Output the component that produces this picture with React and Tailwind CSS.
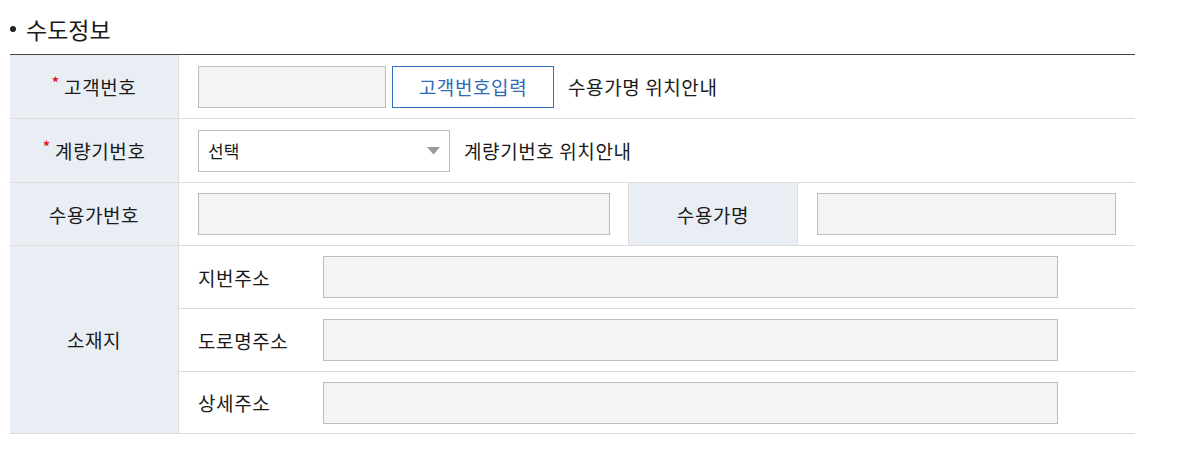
const font = { fontFamily: '"Noto Sans CJK KR", "Noto Sans", sans-serif' };

function Field({ className = '' }) {
  return <div className={`h-[42px] border border-[#bdbdbd] bg-[#f4f4f4] ${className}`} />;
}

function Head({ children, required, className = '' }) {
  return (
    <div className={`flex items-center justify-center bg-[#e9eef5] border-[#dcdcdc] ${className}`}>
      {required && <span className="text-[#e60012] text-[17px] mr-[4px] -translate-y-[4px]">*</span>}
      <span>{children}</span>
    </div>
  );
}

function SubRow({ label, h, last }) {
  return (
    <div className={`flex items-center pl-[19px] ${h} ${last ? '' : 'border-b border-[#dcdcdc]'}`}>
      <span className="w-[125px]">{label}</span>
      <Field className="w-[735px]" />
    </div>
  );
}

export default function App() {
  return (
    <div className="bg-white w-[1179px] h-[453px] text-[#1a1a1a] text-[19px] leading-none tracking-[0.6px]" style={font}>
      <div className="ml-[10px] w-[1125px]">
        <div className="h-[54px] flex items-center gap-[10px] pt-[4px]">
          <span className="w-[6px] h-[6px] rounded-full bg-[#222]" />
          <h2 className="text-[23px] font-normal tracking-normal">수도정보</h2>
        </div>

        <div className="border-t border-[#444]">
          <div className="flex h-[64px] border-b border-[#dcdcdc]">
            <Head required className="w-[169px] border-r">고객번호</Head>
            <div className="flex items-center pl-[19px]">
              <Field className="w-[188px]" />
              <button className="ml-[6px] w-[162px] h-[42px] border border-[#2f72c1] bg-white text-[#2d6bb6] text-[19px]">
                고객번호입력
              </button>
              <span className="ml-[14px]">수용가명 위치안내</span>
            </div>
          </div>

          <div className="flex h-[64px] border-b border-[#dcdcdc]">
            <Head required className="w-[169px] border-r">계량기번호</Head>
            <div className="flex items-center pl-[19px]">
              <div className="w-[252px] h-[42px] border border-[#bdbdbd] bg-white flex items-center justify-between pl-[9px] pr-[9px]">
                <span className="text-[17px] tracking-normal">선택</span>
                <svg width="13" height="8" viewBox="0 0 13 8">
                  <path d="M0 0 H13 L6.5 7.5 Z" fill="#9a9a9a" />
                </svg>
              </div>
              <span className="ml-[14px]">계량기번호 위치안내</span>
            </div>
          </div>

          <div className="flex h-[63px] border-b border-[#dcdcdc]">
            <Head className="w-[169px] border-r">수용가번호</Head>
            <div className="flex items-center pl-[19px] w-[449px]">
              <Field className="w-[412px]" />
            </div>
            <Head className="w-[170px] border-l border-r">수용가명</Head>
            <div className="flex items-center pl-[19px]">
              <Field className="w-[299px]" />
            </div>
          </div>

          <div className="flex border-b border-[#dcdcdc]">
            <Head className="w-[169px] border-r">소재지</Head>
            <div className="flex-1">
              <SubRow label="지번주소" h="h-[63px]" />
              <SubRow label="도로명주소" h="h-[63px]" />
              <SubRow label="상세주소" h="h-[61px]" last />
            </div>
          </div>
        </div>
      </div>
    </div>
  );
}
